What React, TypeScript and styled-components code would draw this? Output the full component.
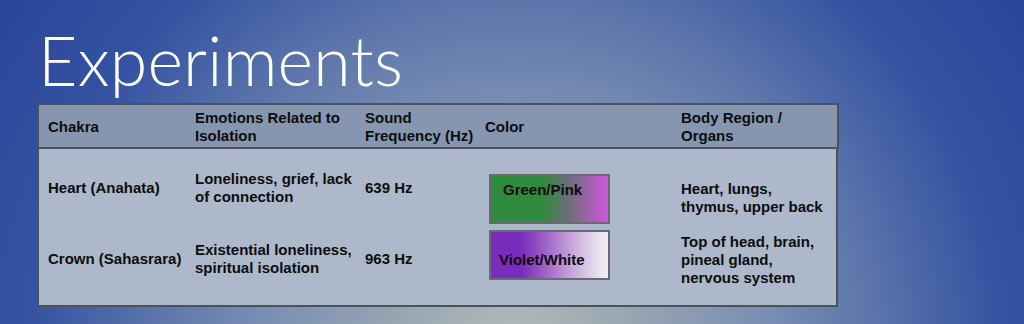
import React from 'react';
import styled, { createGlobalStyle } from 'styled-components';

const GlobalStyle = createGlobalStyle`
    html, body {
        margin: 0;
        padding: 0;
    }
    body {
        font-family: 'Liberation Sans', Arial, sans-serif;
    }
`;

type Row = {
    chakra: string;
    emotions: string[];
    frequency: string;
    color: { label: string; kind: 'green' | 'violet' };
    body: string[];
};

const rows: Row[] = [
    {
        chakra: 'Heart (Anahata)',
        emotions: ['Loneliness, grief, lack', 'of connection'],
        frequency: '639 Hz',
        color: { label: 'Green/Pink', kind: 'green' },
        body: ['Heart, lungs,', 'thymus, upper back'],
    },
    {
        chakra: 'Crown (Sahasrara)',
        emotions: ['Existential loneliness,', 'spiritual isolation'],
        frequency: '963 Hz',
        color: { label: 'Violet/White', kind: 'violet' },
        body: ['Top of head, brain,', 'pineal gland,', 'nervous system'],
    },
];

const App: React.FC = () => {
    return (
        <Slide>
            <GlobalStyle />
            <Title>Experiments</Title>
            <Table>
                <HeaderRow>
                    <HeadCell>Chakra</HeadCell>
                    <HeadCell>
                        Emotions Related to
                        <br />
                        Isolation
                    </HeadCell>
                    <HeadCell>
                        Sound
                        <br />
                        Frequency (Hz)
                    </HeadCell>
                    <HeadCell>Color</HeadCell>
                    <HeadCell>
                        Body Region /
                        <br />
                        Organs
                    </HeadCell>
                </HeaderRow>
                <TableBody>
                    {rows.map((row, index) => (
                        <BodyRow key={row.chakra} $first={index === 0}>
                            <Cell>{row.chakra}</Cell>
                            <Cell>
                                {row.emotions.map((line) => (
                                    <div key={line}>{line}</div>
                                ))}
                            </Cell>
                            <Cell>{row.frequency}</Cell>
                            {/* swatches and organ lists sit a little off the row centre */}
                            <Cell $shift={index === 0 ? 11 : -4}>
                                <Swatch $kind={row.color.kind}>
                                    {row.color.label}
                                </Swatch>
                            </Cell>
                            <Cell $shift={index === 0 ? 10 : 1}>
                                {row.body.map((line) => (
                                    <div key={line}>{line}</div>
                                ))}
                            </Cell>
                        </BodyRow>
                    ))}
                </TableBody>
            </Table>
        </Slide>
    );
};
export default App;

const Slide = styled.div`
    width: 1024px;
    height: 324px;
    overflow: hidden;
    box-sizing: border-box;
    padding: 0 0 0 37px;
    background: radial-gradient(
        circle 660px at 515px 360px,
        #b3bcb8 0%,
        #a9b3b5 8%,
        #94a3b2 21%,
        #7a8fb3 38%,
        #5f78ac 53%,
        #3452a2 74%,
        #2a4699 94%,
        #22409a 100%
    );
`;

const Title = styled.h1`
    margin: 0;
    height: 103px;
    padding: 20px 0 0 1px;
    box-sizing: border-box;
    font-family: Lato, 'Open Sans', sans-serif;
    font-weight: 300;
    font-size: 68px;
    line-height: 80px;
    color: #ffffff;
    letter-spacing: 0.2px;
`;

const Table = styled.div`
    width: 802px;
    color: #0d0d0d;
    font-size: 15px;
    font-weight: bold;
    line-height: 18px;
`;

const HeaderRow = styled.div`
    display: grid;
    grid-template-columns: 147px 170px 120px 196px 1fr;
    align-items: center;
    height: 46px;
    box-sizing: border-box;
    padding: 2px 0 0 9px;
    background: #8796b0;
    border: 2px solid #4b525c;
`;

const HeadCell = styled.div``;

const TableBody = styled.div`
    box-sizing: border-box;
    height: 159px;
    margin-top: -1px;
    width: 801px;
    background: #aeb8cb;
    border: 2px solid #4b525c;
    border-top-width: 1px;
`;

const BodyRow = styled.div<{ $first: boolean }>`
    display: grid;
    grid-template-columns: 147px 170px 120px 196px 1fr;
    align-items: center;
    height: ${(p) => (p.$first ? '77px' : '66px')};
    padding-left: 9px;
`;

// margin on a centred grid item moves it by half, so double the wanted offset
const Cell = styled.div<{ $shift?: number }>`
    margin-top: ${(p) => (p.$shift ? `${p.$shift * 2}px` : '0')};
`;

const swatchFill = {
    green: `linear-gradient(
        to right,
        #2e8b3e 0%,
        #2e8b3e 40%,
        #3b8546 48%,
        #4f7b5c 56%,
        #657077 64%,
        #7d6b8a 72%,
        #9a63a6 82%,
        #b75bc6 91%,
        #cd55dd 100%
    )`,
    violet: `linear-gradient(
        to right,
        #7a2dbd 0%,
        #7a2dbd 26%,
        #8c45c2 36%,
        #a167c9 48%,
        #b88ad3 60%,
        #cdaede 72%,
        #ddcde8 84%,
        #ebe6f0 94%,
        #eeebf2 100%
    )`,
};

const Swatch = styled.div<{ $kind: 'green' | 'violet' }>`
    width: 121px;
    height: 50px;
    margin-left: 4px;
    box-sizing: border-box;
    border: 2px solid #686b72;
    background: ${(p) => swatchFill[p.$kind]};
    display: flex;
    align-items: ${(p) => (p.$kind === 'green' ? 'flex-start' : 'center')};
    padding: ${(p) => (p.$kind === 'green' ? '5px 0 0 12px' : '10px 0 0 8px')};
`;
